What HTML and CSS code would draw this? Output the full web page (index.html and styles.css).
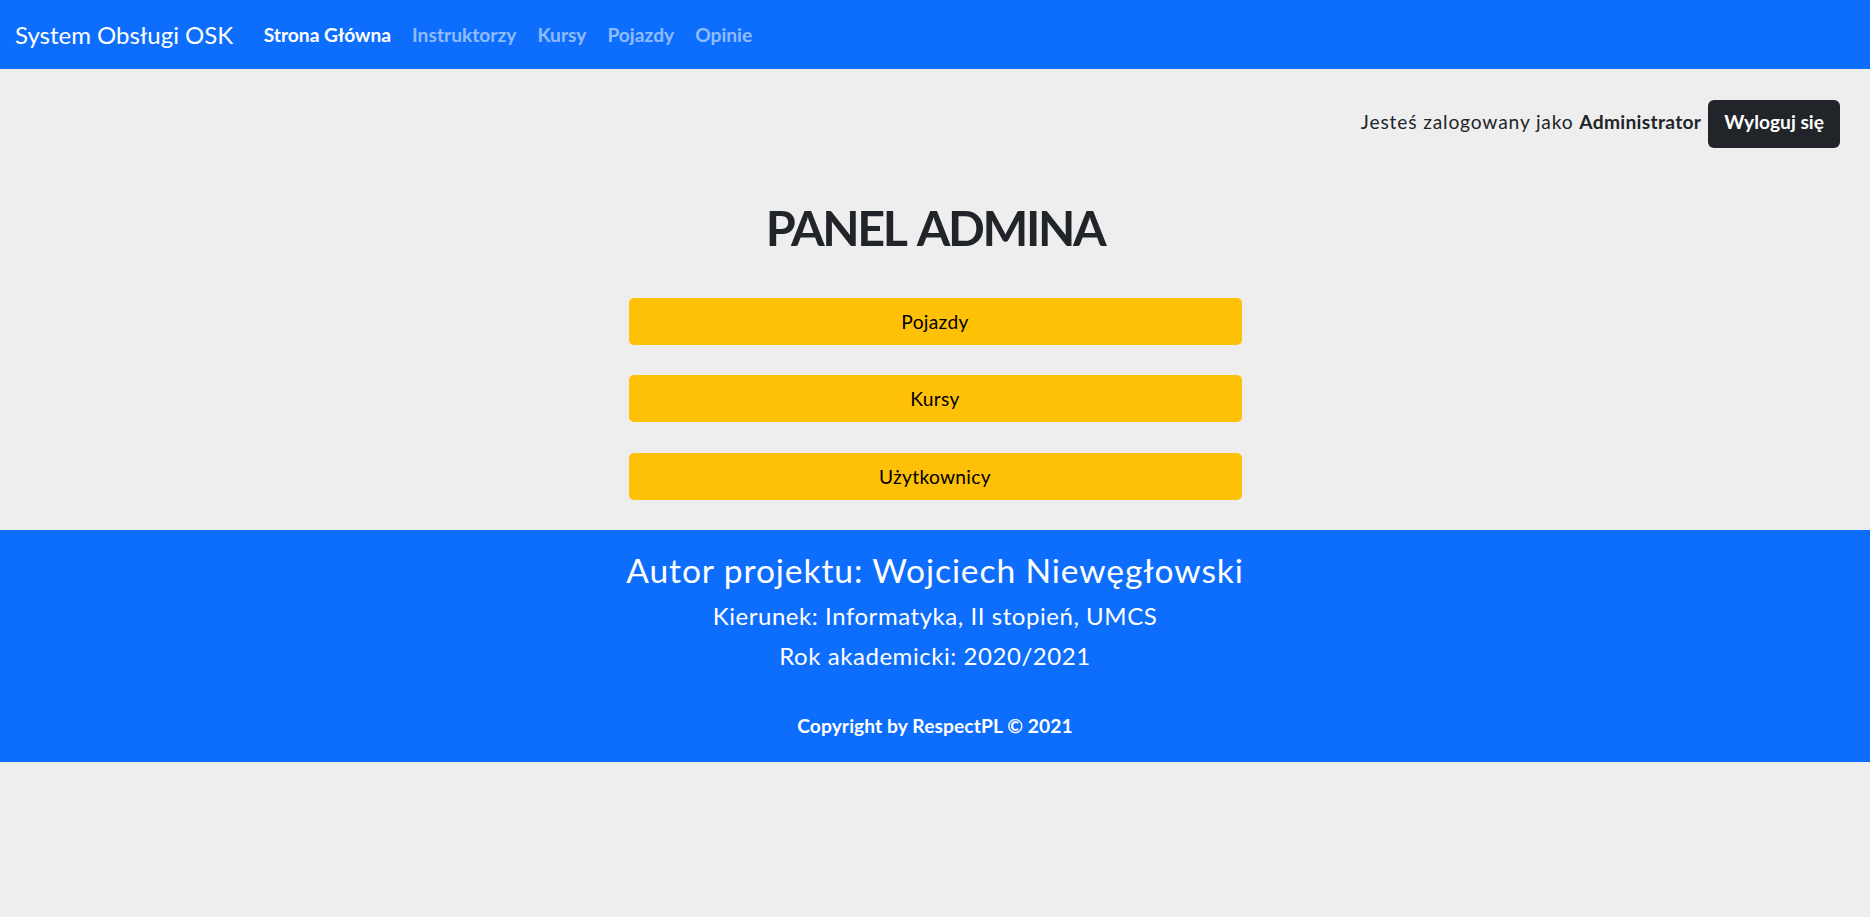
FILE: index.html
```html
<!DOCTYPE html>
<html lang="pl">
<head>
<meta charset="utf-8">
<title>System Obsługi OSK</title>
<link rel="stylesheet" href="styles.css">
</head>
<body>
<nav class="navbar">
  <a class="brand" href="#">System Obsługi OSK</a>
  <ul class="nav">
    <li><a class="nav-link active" href="#">Strona Główna</a></li>
    <li><a class="nav-link" href="#">Instruktorzy</a></li>
    <li><a class="nav-link" href="#">Kursy</a></li>
    <li><a class="nav-link" href="#">Pojazdy</a></li>
    <li><a class="nav-link" href="#">Opinie</a></li>
  </ul>
</nav>

<div class="userbar">
  <span class="user-text">Jesteś zalogowany jako <strong>Administrator</strong></span>
  <a class="btn-dark" href="#">Wyloguj się</a>
</div>

<main class="panel">
  <h1 class="panel-title">PANEL ADMINA</h1>
  <div class="panel-list">
    <a class="btn-warning" href="#">Pojazdy</a>
    <a class="btn-warning" href="#">Kursy</a>
    <a class="btn-warning" href="#">Użytkownicy</a>
  </div>
</main>

<footer class="footer">
  <h3 class="f-author">Autor projektu: Wojciech Niewęgłowski</h3>
  <h5 class="f-line f-first">Kierunek: Informatyka, II stopień, UMCS</h5>
  <h5 class="f-line">Rok akademicki: 2020/2021</h5>
  <p class="f-copy">Copyright by RespectPL © 2021</p>
</footer>
</body>
</html>
```
FILE: styles.css
```css
* { box-sizing: border-box; }

html, body {
  margin: 0;
  padding: 0;
}

body {
  background: #eeeeee;
  color: #212529;
  font-family: "Lato", "Open Sans", sans-serif;
  font-size: 19.2px;
}

a { text-decoration: none; }

.navbar {
  display: flex;
  align-items: center;
  height: 69px;
  padding: 0 15px;
  background: #0d6efd;
}

.brand {
  color: #ffffff;
  font-size: 24px;
  margin-right: 20px;
  white-space: nowrap;
}

.nav {
  display: flex;
  list-style: none;
  margin: 0;
  padding: 0;
}

.nav-link {
  display: block;
  padding: 0 10.5px;
  font-size: 19.2px;
  font-weight: 700;
  color: rgba(255, 255, 255, 0.55);
}

.nav-link.active { color: #ffffff; }

.userbar {
  display: flex;
  justify-content: flex-end;
  align-items: baseline;
  gap: 7px;
  padding: 31px 30px 0 0;
}

.user-text { letter-spacing: 0.85px; }

.user-text strong {
  font-weight: 700;
  letter-spacing: 0.3px;
}

.btn-dark {
  display: inline-block;
  height: 48px;
  padding: 8px 16px 11px;
  line-height: 28.8px;
  background: #212529;
  color: #ffffff;
  font-weight: 700;
  border-radius: 6px;
}

.panel {
  display: flex;
  flex-direction: column;
  align-items: center;
}

.panel-title {
  margin: 48.6px 0 0;
  font-size: 48.5px;
  line-height: 60px;
  font-weight: 700;
  letter-spacing: -2.4px;
  word-spacing: 5px;
  color: #212529;
}

.panel-list {
  display: flex;
  flex-direction: column;
  gap: 30.5px;
  width: 613px;
  margin-top: 41.4px;
}

.btn-warning {
  display: flex;
  align-items: center;
  justify-content: center;
  height: 47px;
  background: #ffc107;
  color: #000000;
  border-radius: 5px;
  letter-spacing: 0.3px;
}

.footer {
  margin-top: 30px;
  padding: 16px 0 21.4px;
  background: #0d6efd;
  color: #ffffff;
  text-align: center;
}

.f-author {
  margin: 0;
  font-size: 33.6px;
  line-height: 48px;
  font-weight: 400;
  letter-spacing: 0.9px;
}

.f-line {
  margin: 0;
  font-size: 24px;
  line-height: 40px;
  font-weight: 400;
  letter-spacing: 0.55px;
}

.f-first { margin-top: 2px; }

.f-copy {
  margin: 34.6px 0 0;
  font-size: 19.2px;
  line-height: 30px;
  font-weight: 700;
  letter-spacing: 0.1px;
}
```
